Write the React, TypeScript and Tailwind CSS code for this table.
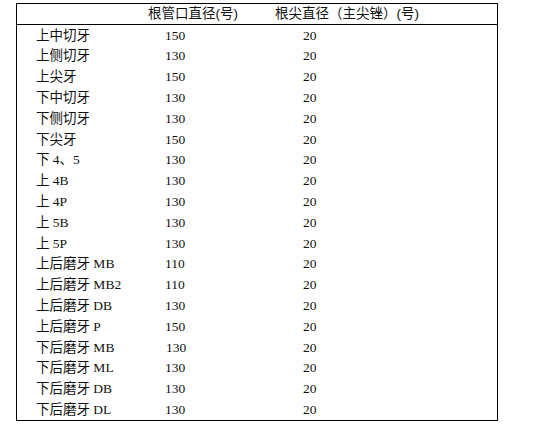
const rows: [string, string, string][] = [
  ["上中切牙", "150", "20"],
  ["上侧切牙", "130", "20"],
  ["上尖牙", "150", "20"],
  ["下中切牙", "130", "20"],
  ["下侧切牙", "130", "20"],
  ["下尖牙", "150", "20"],
  ["下 4、5", "130", "20"],
  ["上 4B", "130", "20"],
  ["上 4P", "130", "20"],
  ["上 5B", "130", "20"],
  ["上 5P", "130", "20"],
  ["上后磨牙 MB", "110", "20"],
  ["上后磨牙 MB2", "110", "20"],
  ["上后磨牙 DB", "130", "20"],
  ["上后磨牙 P", "150", "20"],
  ["下后磨牙 MB", "130", "20"],
  ["下后磨牙 ML", "130", "20"],
  ["下后磨牙 DB", "130", "20"],
  ["下后磨牙 DL", "130", "20"],
]

export default function App() {
  return (
    <div className="h-[426px] w-[539px] bg-white pt-[3px] pl-[16px] text-[#111]">
      <div className="w-[482px] border border-black">
        <div className="flex h-[21px] items-center border-b border-black font-['Liberation_Sans','Noto_Sans_CJK_SC',sans-serif] text-[13.5px] leading-none">
          <div className="w-[131px] shrink-0" />
          <div className="w-[127px] shrink-0">根管口直径(号)</div>
          <div className="flex-1">根尖直径（主尖锉）(号)</div>
        </div>
        {rows.map(([tooth, orifice, apex], i) => (
          <div
            key={tooth}
            className="flex h-[20.8px] items-center font-['Liberation_Serif','Noto_Sans_CJK_SC',serif] text-[13.5px] leading-none"
          >
            <div className="w-[131px] shrink-0 pl-[19px]">{tooth}</div>
            <div className={i === 15 ? "w-[127px] shrink-0 pl-[18px]" : "w-[127px] shrink-0 pl-[17px]"}>
              {orifice}
            </div>
            <div className="flex-1 pl-[28px]">{apex}</div>
          </div>
        ))}
      </div>
    </div>
  )
}
